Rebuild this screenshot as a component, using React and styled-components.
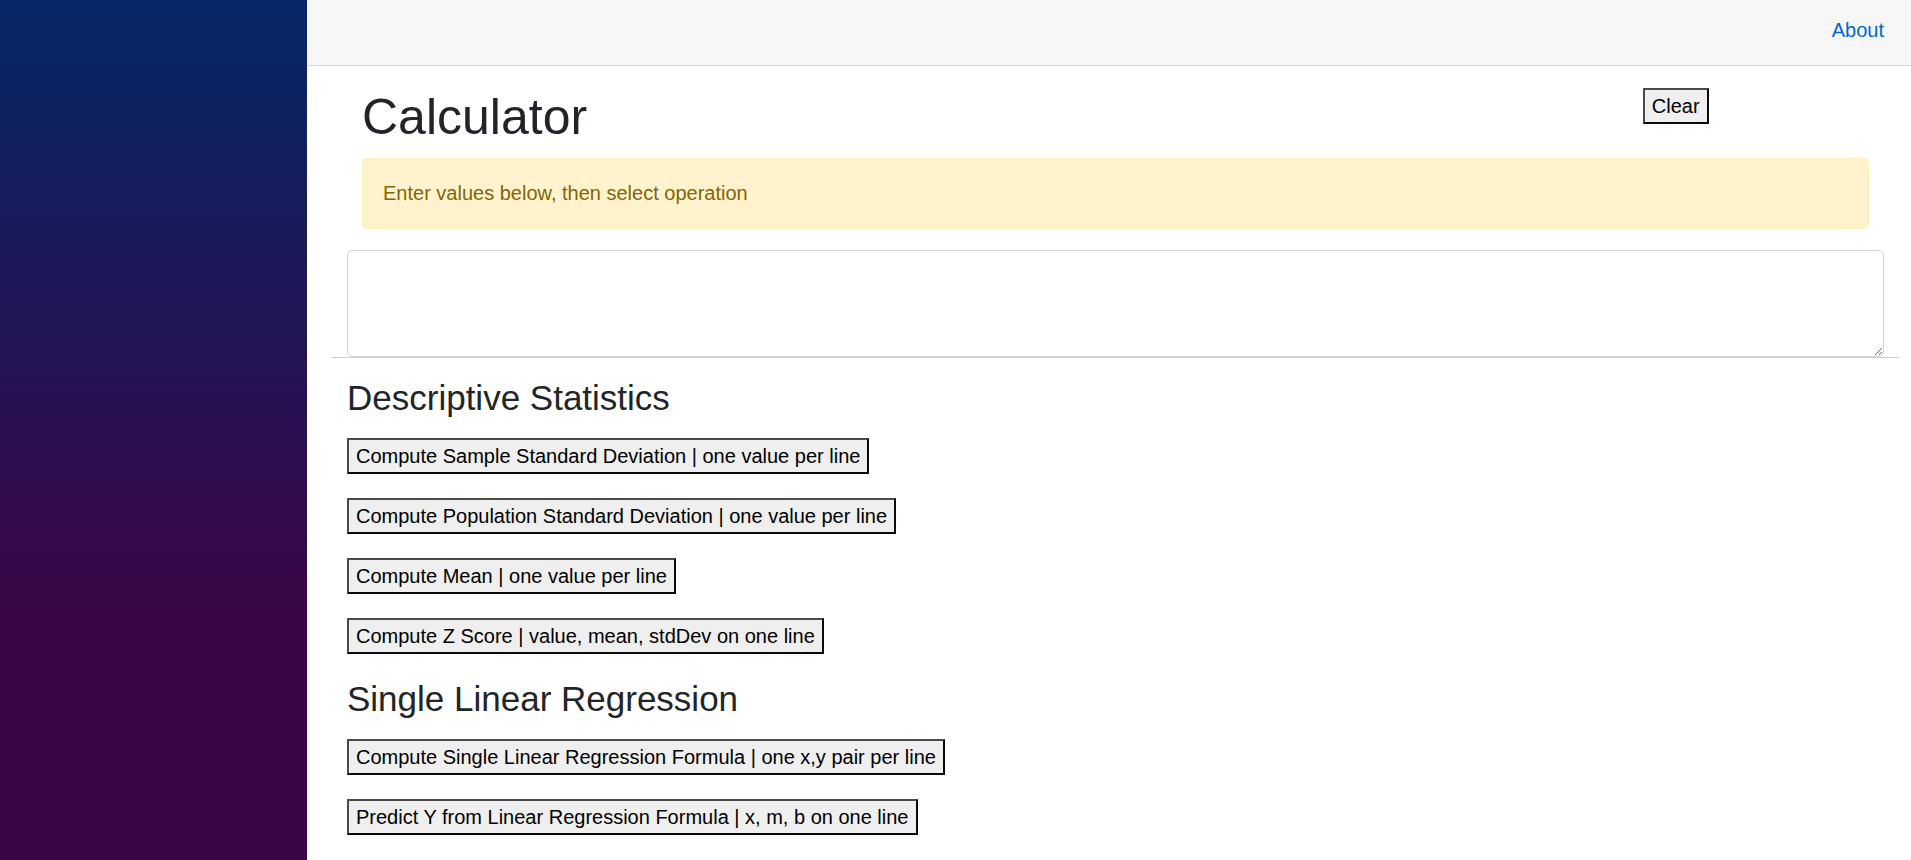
import React from 'react';
import styled, { createGlobalStyle } from 'styled-components';

const GlobalStyle = createGlobalStyle`
  html, body {
    margin: 0;
    padding: 0;
  }

  body {
    font-family: 'Liberation Sans', Arial, sans-serif;
    font-size: 20px;
    line-height: 1.5;
    color: #212529;
    background: #fff;
  }

  *, *::before, *::after {
    box-sizing: border-box;
  }
`;

const Page = styled.div`
  display: flex;
  min-height: 100vh;
`;

const Sidebar = styled.div`
  flex: 0 0 307px;
  background-image: linear-gradient(180deg, rgb(5, 39, 103) 0%, #3a0647 70%);
`;

const Main = styled.div`
  flex: 1;
  display: flex;
  flex-direction: column;
`;

const TopRow = styled.div`
  height: 66px;
  display: flex;
  align-items: center;
  justify-content: flex-end;
  padding: 0 27px 5px 40px;
  background: #f7f7f7;
  border-bottom: 1px solid #d6d5d5;

  a {
    color: #0366d6;
    text-decoration: none;
    font-size: 20px;
  }
`;

const Content = styled.div`
  padding: 21px 27px 0 40px;
`;

const HeaderRow = styled.div`
  display: flex;
`;

const Col = styled.div`
  flex: 0 0 ${(p) => p.$span}%;
  max-width: ${(p) => p.$span}%;
  padding: 0 15px;
`;

const Title = styled.h1`
  margin: 0 0 11px;
  font-size: 50px;
  font-weight: 500;
  line-height: 1.2;
`;

const Button = styled.button`
  font-family: 'Liberation Sans', Arial, sans-serif;
  font-size: 20px;
  line-height: 30px;
  color: #000;
  background: #efefef;
  padding: 1px 7px;
  border: 2px solid;
  border-color: #4a4a4a #0a0a0a #0a0a0a #4a4a4a;
  border-radius: 0;
  cursor: pointer;
  display: block;
`;

const ClearButton = styled(Button)`
  margin-top: 1px;
`;

const AlertWrap = styled.div`
  padding: 0 15px;
`;

const Alert = styled.div`
  padding: 19px 20px;
  margin-bottom: 21px;
  line-height: 31px;
  color: #856404;
  background: #fff3cd;
  border: 1px solid #ffeeba;
  border-radius: 5px;
`;

const InputRow = styled.div`
  margin: 0 -15px 0 -16px;
  padding: 0 15px 0 16px;
  border-bottom: 1px solid #cfcfcf;
`;

const Input = styled.textarea`
  display: block;
  width: 100%;
  height: 107px;
  margin: 0;
  padding: 8px 12px;
  font-family: 'Liberation Sans', Arial, sans-serif;
  font-size: 20px;
  border: 1px solid #ced4da;
  border-radius: 5px;
  resize: both;
`;

const Section = styled.section`
  margin-top: ${(p) => p.$top}px;
`;

const SectionTitle = styled.h3`
  margin: 0 0 19px;
  font-size: 35px;
  font-weight: 500;
  line-height: 1.2;
`;

const ButtonList = styled.div`
  display: flex;
  flex-direction: column;
  align-items: flex-start;
  gap: 24px;
`;

const descriptive = [
  'Compute Sample Standard Deviation | one value per line',
  'Compute Population Standard Deviation | one value per line',
  'Compute Mean | one value per line',
  'Compute Z Score | value, mean, stdDev on one line',
];

const regression = [
  'Compute Single Linear Regression Formula | one x,y pair per line',
  'Predict Y from Linear Regression Formula | x, m, b on one line',
];

function App() {
  return (
    <>
      <GlobalStyle />
      <Page>
        <Sidebar />
        <Main>
          <TopRow>
            <a href="#about">About</a>
          </TopRow>
          <Content>
            <HeaderRow>
              <Col $span={83.3333}>
                <Title>Calculator</Title>
              </Col>
              <Col $span={16.6667}>
                <ClearButton>Clear</ClearButton>
              </Col>
            </HeaderRow>
            <AlertWrap>
              <Alert>Enter values below, then select operation</Alert>
            </AlertWrap>
            <InputRow>
              <Input />
            </InputRow>
            <Section $top={19}>
              <SectionTitle>Descriptive Statistics</SectionTitle>
              <ButtonList>
                {descriptive.map((label) => (
                  <Button key={label}>{label}</Button>
                ))}
              </ButtonList>
            </Section>
            <Section $top={24}>
              <SectionTitle>Single Linear Regression</SectionTitle>
              <ButtonList>
                {regression.map((label) => (
                  <Button key={label}>{label}</Button>
                ))}
              </ButtonList>
            </Section>
          </Content>
        </Main>
      </Page>
    </>
  );
}

export default App;
